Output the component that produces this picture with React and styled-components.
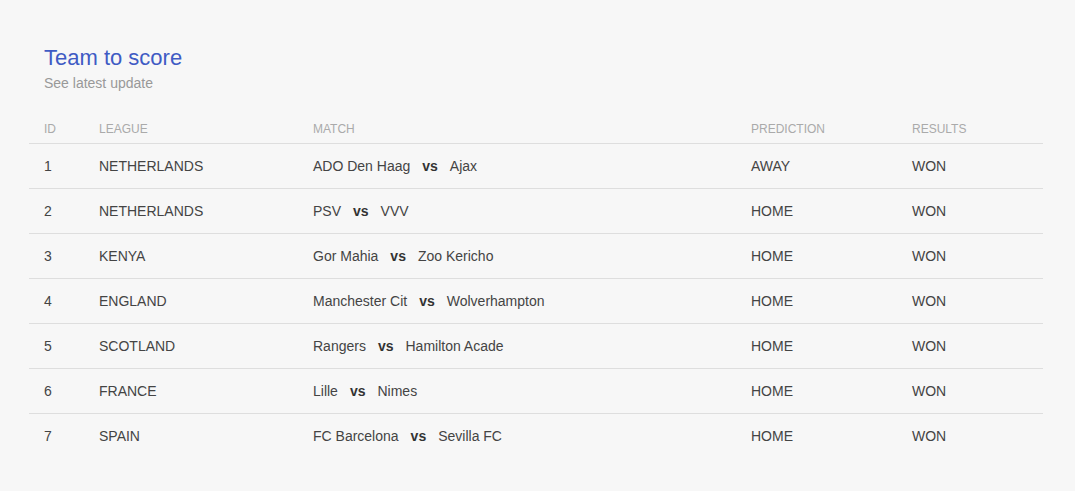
import React from 'react';
import styled, { createGlobalStyle } from 'styled-components';

const GlobalStyle = createGlobalStyle`
  html, body {
    margin: 0;
    padding: 0;
    background: #f7f7f7;
  }
  body {
    font-family: 'Liberation Sans', Arial, sans-serif;
  }
`;

const Page = styled.div`
  min-height: 491px;
  box-sizing: border-box;
  padding: 45px 32px 0 29px;
  background: #f7f7f7;
`;

const Heading = styled.div`
  padding: 0 15px;
`;

const Title = styled.h2`
  margin: 0;
  font-size: 22px;
  line-height: 26px;
  font-weight: 400;
  color: #3f5bc4;
`;

const Subtitle = styled.p`
  margin: 2px 0 0;
  font-size: 14px;
  line-height: 20px;
  color: #999;
`;

const Table = styled.table`
  width: 100%;
  margin-top: 28px;
  border-collapse: collapse;
  table-layout: fixed;
`;

const Th = styled.th`
  padding: 0 15px 6px;
  text-align: left;
  font-size: 12px;
  line-height: 16px;
  font-weight: 400;
  color: #aaa;
  text-transform: uppercase;
  border-bottom: 1px solid #dedede;
  width: ${p => p.$w || 'auto'};
`;

const Row = styled.tr`
  & + & td {
    border-top: 1px solid #dedede;
  }
`;

const Td = styled.td`
  padding: 12px 15px;
  font-size: 14px;
  line-height: 20px;
  color: #444;
  white-space: nowrap;
  overflow: hidden;
`;

const Vs = styled.b`
  margin: 0 12px;
  font-weight: 700;
  color: #333;
`;

const rows = [
  [1, 'NETHERLANDS', 'ADO Den Haag', 'Ajax', 'AWAY', 'WON'],
  [2, 'NETHERLANDS', 'PSV', 'VVV', 'HOME', 'WON'],
  [3, 'KENYA', 'Gor Mahia', 'Zoo Kericho', 'HOME', 'WON'],
  [4, 'ENGLAND', 'Manchester Cit', 'Wolverhampton', 'HOME', 'WON'],
  [5, 'SCOTLAND', 'Rangers', 'Hamilton Acade', 'HOME', 'WON'],
  [6, 'FRANCE', 'Lille', 'Nimes', 'HOME', 'WON'],
  [7, 'SPAIN', 'FC Barcelona', 'Sevilla FC', 'HOME', 'WON'],
];

const App = () => {
  return (
    <Page>
      <GlobalStyle />
      <Heading>
        <Title>Team to score</Title>
        <Subtitle>See latest update</Subtitle>
      </Heading>
      <Table>
        <thead>
          <tr>
            <Th $w="25px">ID</Th>
            <Th $w="184px">League</Th>
            <Th $w="408px">Match</Th>
            <Th $w="131px">Prediction</Th>
            <Th>Results</Th>
          </tr>
        </thead>
        <tbody>
          {rows.map(([id, league, home, away, pred, res]) => (
            <Row key={id}>
              <Td>{id}</Td>
              <Td>{league}</Td>
              <Td>
                {home}
                <Vs>vs</Vs>
                {away}
              </Td>
              <Td>{pred}</Td>
              <Td>{res}</Td>
            </Row>
          ))}
        </tbody>
      </Table>
    </Page>
  );
};

export default App;
